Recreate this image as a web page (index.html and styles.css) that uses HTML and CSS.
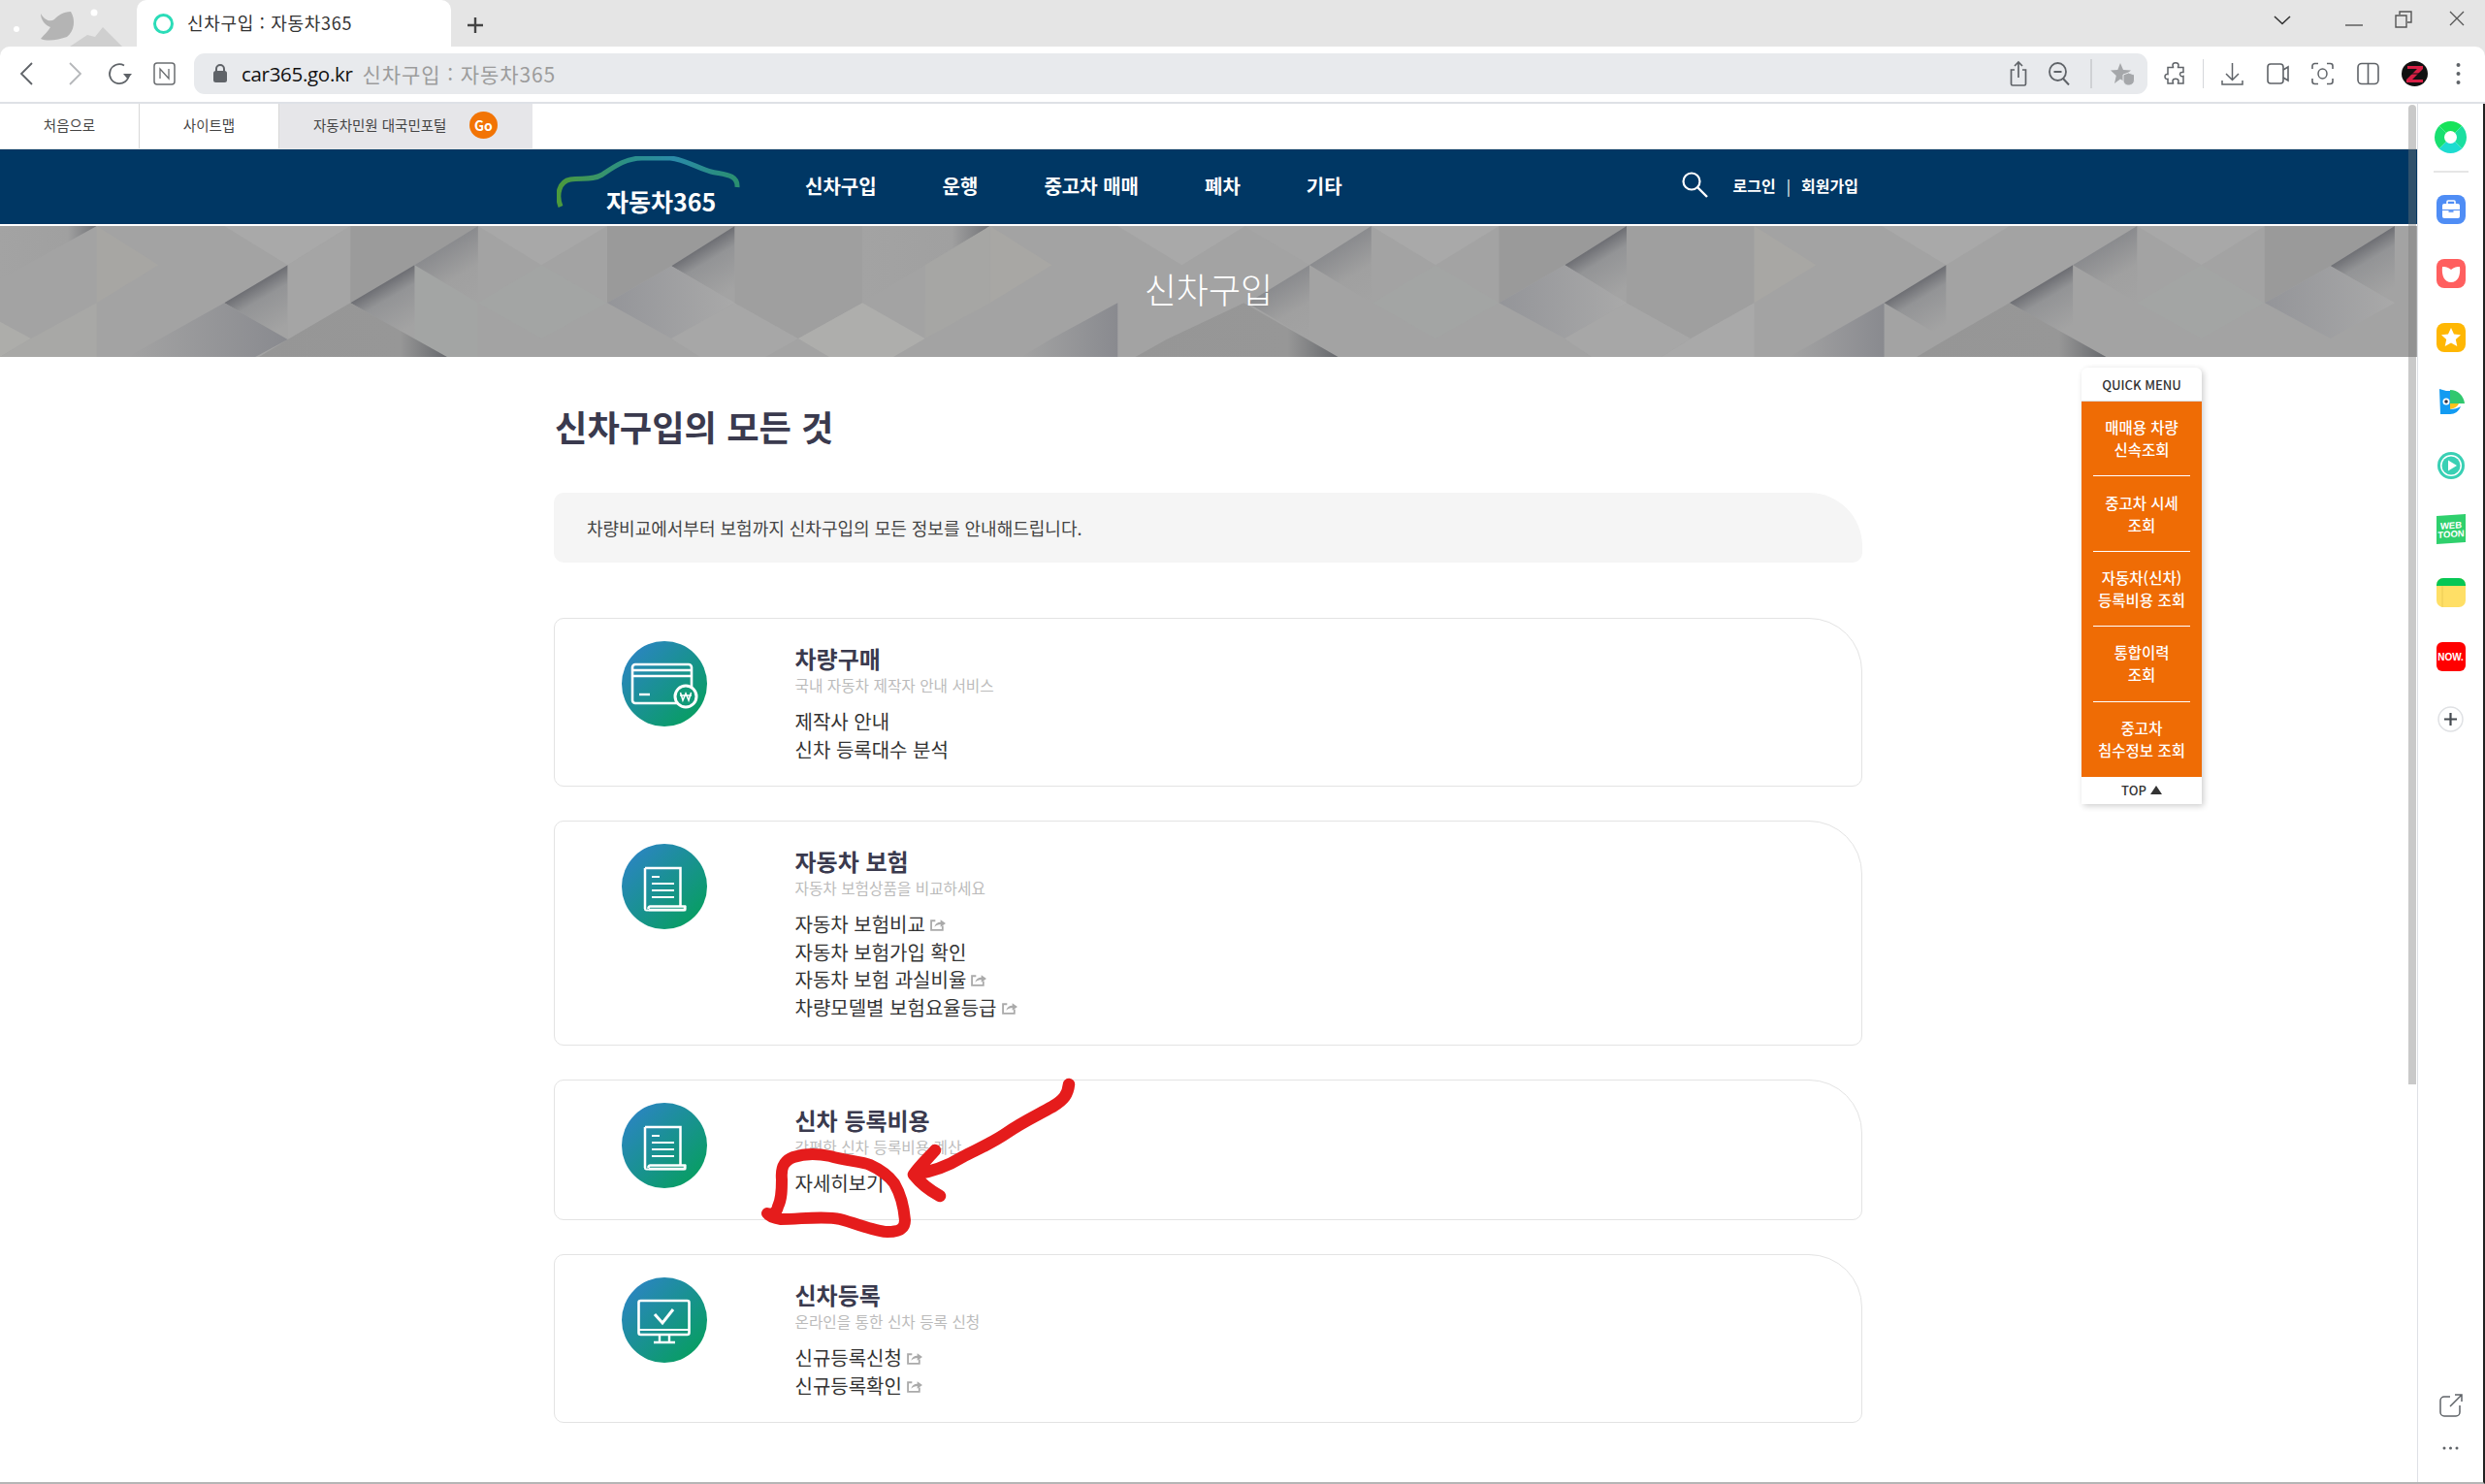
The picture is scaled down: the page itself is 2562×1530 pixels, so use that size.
FILE: index.html
```html
<!DOCTYPE html>
<html lang="ko">
<head>
<meta charset="utf-8">
<title>신차구입 : 자동차365</title>
<link rel="stylesheet" href="styles.css">
</head>
<body>
<div class="browser">
  <header class="tabstrip">
    <svg class="theme" width="141" height="48" viewBox="0 0 141 48">
      <circle cx="17" cy="30" r="3" fill="#fff"/><circle cx="97" cy="13" r="3.5" fill="#fff"/>
      <path d="M42 14c4 7 10 9 14 6 4-4 9-8 17-8 5 8 4 20-4 26-8 3-20 5-27 2 4-5 8-8 10-12-6-2-10-8-10-14z" fill="#b4b4b4"/>
      <path d="M72 48l18-12 8 2 8-10 20 20z" fill="#cfcfcf"/>
    </svg>
    <div class="tab">
      <span class="tab-fav"></span>
      <span class="tab-title">신차구입 : 자동차365</span>
    </div>
    <svg class="newtab" width="20" height="20" viewBox="0 0 20 20"><path d="M10 2v16M2 10h16" stroke="#444" stroke-width="2.4"/></svg>
    <div class="winctl">
      <svg width="18" height="10" viewBox="0 0 18 10"><path d="M1 1l8 7.5L17 1" fill="none" stroke="#333" stroke-width="1.6"/></svg>
      <svg class="wc-min" width="18" height="18" viewBox="0 0 18 18"><path d="M0 16h18" stroke="#555" stroke-width="1.4"/></svg>
      <svg class="wc-max" width="18" height="18" viewBox="0 0 18 18"><path d="M5 4V1h12v11h-4M1 5h11v12H1z" fill="none" stroke="#555" stroke-width="1.4"/></svg>
      <svg class="wc-close" width="16" height="16" viewBox="0 0 16 16"><path d="M1 1l14 14M15 1L1 15" stroke="#555" stroke-width="1.3"/></svg>
    </div>
  </header>

  <div class="toolbar">
    <div class="tb-nav">
      <svg width="14" height="24" viewBox="0 0 14 24"><path d="M13 1L2 12l11 11" fill="none" stroke="#5f6368" stroke-width="1.8"/></svg>
      <svg class="tb-fwd" width="14" height="24" viewBox="0 0 14 24"><path d="M1 1l11 11L1 23" fill="none" stroke="#b5b7ba" stroke-width="1.8"/></svg>
      <svg class="tb-reload" width="26" height="24" viewBox="0 0 26 24"><path d="M17 3.500A10 10 0 1 0 22 13" fill="none" stroke="#5f6368" stroke-width="1.8"/><path d="M16 12h9l-4.500 5.500z" fill="#5f6368"/></svg>
      <svg class="tb-n" width="23" height="24" viewBox="0 0 23 24"><rect x="1" y="1" width="21" height="22" rx="3" fill="none" stroke="#6a6d70" stroke-width="1.5"/><path d="M7 17V7l9 10V7" fill="none" stroke="#6a6d70" stroke-width="1.3"/></svg>
    </div>
    <div class="omnibox">
      <svg class="lock" width="16" height="19" viewBox="0 0 16 19"><path d="M4 8V5a4 4 0 0 1 8 0v3" fill="none" stroke="#5f6368" stroke-width="2"/><rect x="1" y="7" width="14" height="12" rx="2.500" fill="#5f6368"/></svg>
      <span class="url">car365.go.kr</span>
      <span class="url-title">신차구입 : 자동차365</span>
      <div class="omni-right">
        <svg width="18" height="27" viewBox="0 0 18 27"><path d="M5 10H1.500v14.500a1.500 1.500 0 0 0 1.500 1.500h12a1.500 1.500 0 0 0 1.500-1.500V10H13M9 18V2M5 6l4-4 4 4" fill="none" stroke="#5f6368" stroke-width="1.700"/></svg>
        <svg class="om-zoom" width="22" height="24" viewBox="0 0 22 24"><ellipse cx="9.500" cy="10" rx="8.500" ry="9" fill="none" stroke="#5f6368" stroke-width="1.800"/><path d="M5.500 10h8M15 17l6 6.500" stroke="#5f6368" stroke-width="2"/></svg>
        <span class="om-sep"></span>
        <svg width="25" height="24" viewBox="0 0 25 24"><path d="M10 1l3 7 8 .6-6 5 1 7.400-6-3.600L4 22l1.800-8L0 8.600 7.300 8z" fill="#a5a7aa"/><path d="M13 13l5.500-2 6 2v5c0 4-3 6-6 6s-5.500-2-5.500-6z" fill="#a5a7aa" stroke="#e8eaed"/></svg>
      </div>
    </div>
    <div class="tb-right">
      <svg width="23" height="24" viewBox="0 0 23 24"><path d="M9 3c0-3 6-3 6 0 0 1-.5 1.500-.5 2.500H20v5c-1 0-2-.500-3 .5-1.500 2 .5 4.500 3 3.500v7.500h-5.500c0-1 .500-1.500.500-2.500 0-3-6-3-6 0 0 1 .5 1.500.5 2.500H4v-4.500C2 18 1 16.500 1 15s1-3 3-2.500V5.500h5.500C9.500 4.500 9 4 9 3z" fill="none" stroke="#5f6368" stroke-width="1.500"/></svg>
      <span class="tb-sep"></span>
      <svg width="23" height="24" viewBox="0 0 23 24"><path d="M11.500 1v17M5 12l6.500 6.500L18 12M1 19v4h21v-4" fill="none" stroke="#5f6368" stroke-width="1.500"/></svg>
      <svg width="23" height="24" viewBox="0 0 23 24"><rect x="1" y="2" width="16" height="20" rx="3" fill="none" stroke="#5f6368" stroke-width="1.600"/><path d="M17 8l5-3v14l-5-3" fill="none" stroke="#5f6368" stroke-width="1.600"/></svg>
      <svg width="23" height="24" viewBox="0 0 23 24"><path d="M1 7V4a2.500 2.500 0 0 1 2.500-2.500H7M16 1.500h3.500A2.500 2.500 0 0 1 22 4v3M22 17v3a2.500 2.500 0 0 1-2.500 2.500H16M7 22.500H3.500A2.500 2.500 0 0 1 1 20v-3" fill="none" stroke="#5f6368" stroke-width="1.600"/><ellipse cx="11.500" cy="12" rx="4.500" ry="5" fill="none" stroke="#5f6368" stroke-width="1.500"/></svg>
      <svg width="23" height="24" viewBox="0 0 23 24"><rect x="1" y="1.500" width="21" height="21" rx="4" fill="none" stroke="#5f6368" stroke-width="1.600"/><path d="M11.500 1.500v21" stroke="#5f6368" stroke-width="1.600"/></svg>
      <svg class="avatar" width="27" height="26" viewBox="0 0 27 26"><ellipse cx="13.500" cy="13" rx="13.500" ry="13" fill="#111"/><path d="M6 5h16v3L11 19h11v3H5v-3L16 8H6z" fill="#d81f45"/><path d="M5 13h17" stroke="#111" stroke-width="1"/></svg>
      <svg class="dots" width="5" height="24" viewBox="0 0 5 24"><circle cx="2.500" cy="3" r="2" fill="#5f6368"/><circle cx="2.500" cy="12" r="2" fill="#5f6368"/><circle cx="2.500" cy="21" r="2" fill="#5f6368"/></svg>
    </div>
  </div>

  <div class="viewport">
    <main class="page">
      <div class="utility">
        <a class="util-item">처음으로</a>
        <a class="util-item">사이트맵</a>
        <a class="util-item util-portal">자동차민원 대국민포털<span class="go">Go</span></a>
      </div>
      <nav class="gnb">
        <div class="gnb-inner">
          <div class="logo">
            <svg width="192" height="56" viewBox="0 0 192 56">
              <defs><linearGradient id="logoGrad" x1="0" y1="0" x2="1" y2="0"><stop offset="0" stop-color="#4c9a3c"/><stop offset=".4" stop-color="#2a8f8a"/><stop offset=".65" stop-color="#2a8aa8"/><stop offset="1" stop-color="#2a8f70"/></linearGradient></defs>
              <path d="M4 52C-1 39 3 26 14 24 26 22 37 25 47 19 59 11 71 2 88 2H117C131 3 147 13 159 16 171 19 187 18 186 32" fill="none" stroke="url(#logoGrad)" stroke-width="5"/>
            </svg>
            <span class="logo-text">자동차365</span>
          </div>
          <ul class="gnb-menu">
            <li>신차구입</li><li>운행</li><li>중고차 매매</li><li>폐차</li><li>기타</li>
          </ul>
          <div class="gnb-right">
            <svg class="search" width="28" height="28" viewBox="0 0 28 28"><circle cx="11" cy="11" r="8.500" fill="none" stroke="#fff" stroke-width="2.200"/><path d="M17.500 17.500L27 27" stroke="#fff" stroke-width="2.400"/></svg>
            <span>로그인</span><span class="gnb-bar">|</span><span>회원가입</span>
          </div>
        </div>
      </nav>
      <section class="hero">
        <svg class="hero-bg" viewBox="0 24 3125 405" preserveAspectRatio="none">
          <defs>
            <linearGradient id="shR" x1="0" y1=".5" x2=".4" y2="1.300"><stop offset="0" stop-color="#6d6e73"/><stop offset=".25" stop-color="#939496"/><stop offset=".8" stop-color="#a3a3a3"/></linearGradient>
            <linearGradient id="shM" x1="0" y1=".5" x2=".4" y2="1.300"><stop offset="0" stop-color="#8a8b8e"/><stop offset=".5" stop-color="#a0a0a0"/><stop offset="1" stop-color="#a3a3a3"/></linearGradient>
            <linearGradient id="shL"><stop offset="0" stop-color="#a3a3a3"/><stop offset=".7" stop-color="#a0a0a0"/><stop offset="1" stop-color="#737478"/></linearGradient>
            <linearGradient id="shB"><stop offset="0" stop-color="#969696"/><stop offset=".75" stop-color="#979797"/><stop offset="1" stop-color="#66686c"/></linearGradient>
            <linearGradient id="dia"><stop offset="0" stop-color="#949599"/><stop offset="1" stop-color="#a9a9a9"/></linearGradient>
            <linearGradient id="low" x1="0" y1="0" x2="1" y2="0"><stop offset="0" stop-color="#a3a3a3"/><stop offset="1" stop-color="#898a8f"/></linearGradient>
            <g id="heroA">
              <path fill="url(#shL)" d="M0 24H125L0 190z"/>
              <path fill="#a7a6a3" d="M125 24L205 145 125 262z"/>
              <path fill="#a9a9a9" d="M290 24H453L372 145z"/>
              <path fill="#9b9b9b" d="M453 24H618L536 145 453 262z"/>
              <path fill="#a3a5a4" d="M536 145H618V429H536z"/>
              <path fill="url(#shR)" d="M372 145L290 262 372 375z"/>
              <path fill="#a5a5a5" d="M372 145L453 24V262L372 375z"/>
              <path fill="url(#shR)" d="M536 145L453 262 536 375z"/>
              <path fill="url(#shM)" d="M618 24L536 145 618 262z"/>
              <path fill="#a8a8a8" d="M618 24H785L700 145z"/>
              <path fill="#9a9a9a" d="M785 24H950L868 148 785 262z"/>
              <path fill="url(#shR)" d="M950 24L868 148 950 262z"/>
              <path fill="#a3a5a4" d="M618 262L700 145 785 262 700 372z"/>
              <path fill="url(#dia)" d="M785 262L868 148 950 262 868 372z"/>
              <path fill="#a7a7a7" d="M868 372L950 262 1032 372 990 429H905z"/>
              <path fill="#9f9f9f" d="M950 24H1115V262L1032 372 950 262z"/>
              <path fill="#aeaeac" d="M1032 372L1115 262 1196 372 1155 429H1072z"/>
              <path fill="url(#shL)" d="M1115 24H1280L1115 262z"/>
              <path fill="#a6a6a4" d="M1196 145L1280 24V262L1196 372z"/>
              <path fill="#a8a7a4" d="M1280 24L1360 145 1280 262z"/>
              <path fill="#a9a9a9" d="M1445 24H1610L1528 145z"/>
              <path fill="url(#shB)" d="M372 375L453 262 578 429H335z"/>
              <path fill="url(#low)" d="M290 262L372 375 330 429H165z"/>
              <path fill="url(#low)" d="M1445 262L1360 372 1320 429H1445z"/>
              <path fill="#adadaa" d="M0 320L40 372 0 429z"/>
              <path fill="#a8a8a6" d="M40 372L125 262V429H0z"/>
            </g>
            <g id="heroB">
              <path fill="#a5a5a5" d="M40 24H205L125 145z"/>
              <path fill="#a9a9a9" d="M205 24H370L288 145z"/>
              <path fill="#9a9a9a" d="M370 24H535L455 145 370 262z"/>
              <path fill="url(#shR)" d="M535 24L455 145 535 262z"/>
              <path fill="url(#shM)" d="M205 24L125 145 205 262z"/>
              <path fill="url(#shM)" d="M125 145L45 262 125 375z"/>
              <path fill="#a3a5a4" d="M207 262L288 145 370 262 288 372z"/>
              <path fill="url(#dia)" d="M370 262L455 145 535 262 455 372z"/>
              <path fill="#a7a7a7" d="M455 372L535 262 618 372 580 429H490z"/>
              <path fill="#9f9f9f" d="M535 24H700V262L618 372 535 262z"/>
              <path fill="#a9a9a9" d="M618 372L700 262V429H580z"/>
              <path fill="#a8a7a4" d="M700 24L780 145 700 262z"/>
              <path fill="#a9a9a9" d="M865 24H1030L948 145z"/>
              <path fill="url(#shR)" d="M948 145L868 262 948 375z"/>
              <path fill="url(#shR)" d="M1112 145L1030 262 1112 375z"/>
              <path fill="url(#shM)" d="M1195 24L1112 145 1195 262z"/>
              <path fill="#a8a8a8" d="M1195 24H1360L1278 145z"/>
              <path fill="#9a9a9a" d="M1360 24H1528L1445 148 1360 262z"/>
              <path fill="url(#shR)" d="M1528 24L1445 148 1528 262z"/>
              <path fill="#a3a5a4" d="M1195 262L1278 145 1360 262 1278 372z"/>
              <path fill="url(#dia)" d="M1360 262L1445 148 1528 262 1445 372z"/>
              <path fill="url(#shB)" d="M948 375L1030 262 1155 429H910z"/>
              <path fill="url(#shB)" d="M-60 375L40 262 162 429H-100z"/>
              <path fill="url(#low)" d="M868 262L745 429H868z"/>
            </g>
          </defs>
          <rect x="0" y="24" width="3125" height="405" fill="#a3a3a3"/>
          <use href="#heroA"/>
          <use href="#heroB" x="1568"/>
        </svg>
        <span class="hero-title">신차구입</span>
      </section>

      <div class="content">
        <h1 class="page-title">신차구입의 모든 것</h1>
        <p class="notice">차량비교에서부터 보험까지 신차구입의 모든 정보를 안내해드립니다.</p>

        <svg class="defs-holder" width="0" height="0">
          <defs>
            <symbol id="ext" viewBox="0 0 15 12"><path d="M5 2H1v9h11V7" fill="none" stroke="#aaa" stroke-width="1.700"/><path d="M4 8c1-3 3-4.500 6-4.500V1l5 3.500L10 8V5.500C8 5.500 6 6.500 4 8z" fill="#aaa"/></symbol>
            <symbol id="doc" viewBox="0 0 88 88"><path d="M24 25h36.500v39M24 25v42M28 68h37v-3.500H29.500a2 2 0 0 0-2 2.500" fill="none" stroke="#fff" stroke-width="2.500"/><path d="M24 67a1.500 1.500 0 0 0 1.500 1.500H64a1.500 1.500 0 0 0 1.500-1.500v-3" fill="none" stroke="#fff" stroke-width="2"/><path d="M31 34h8M31 41h23M31 48h23M31 55h23" stroke="#fff" stroke-width="2"/></symbol>
          </defs>
        </svg>

        <article class="card">
          <div class="card-icon">
            <svg width="88" height="88" viewBox="0 0 88 88"><rect x="11" y="24" width="61" height="40" rx="3" fill="none" stroke="#fff" stroke-width="2.600"/><path d="M12 30h59M12 36h59" stroke="#fff" stroke-width="2.400"/><path d="M18 55h11" stroke="#fff" stroke-width="2.400"/><circle cx="66" cy="57" r="11" fill="#129a78" stroke="#fff" stroke-width="3"/><path d="M60.500 53l2.500 8 3-7 3 7 2.500-8M60 56h12" fill="none" stroke="#fff" stroke-width="1.500"/></svg>
          </div>
          <div class="card-body">
            <h2 class="card-title">차량구매</h2>
            <p class="card-sub">국내 자동차 제작자 안내 서비스</p>
            <ul class="card-links">
              <li>제작사 안내</li>
              <li>신차 등록대수 분석</li>
            </ul>
          </div>
        </article>

        <article class="card">
          <div class="card-icon"><svg width="88" height="88"><use href="#doc"/></svg></div>
          <div class="card-body">
            <h2 class="card-title">자동차 보험</h2>
            <p class="card-sub">자동차 보험상품을 비교하세요</p>
            <ul class="card-links">
              <li>자동차 보험비교<svg class="ext" width="16" height="13"><use href="#ext"/></svg></li>
              <li>자동차 보험가입 확인</li>
              <li>자동차 보험 과실비율<svg class="ext" width="16" height="13"><use href="#ext"/></svg></li>
              <li>차량모델별 보험요율등급<svg class="ext" width="16" height="13"><use href="#ext"/></svg></li>
            </ul>
          </div>
        </article>

        <article class="card">
          <div class="card-icon"><svg width="88" height="88"><use href="#doc"/></svg></div>
          <div class="card-body">
            <h2 class="card-title">신차 등록비용</h2>
            <p class="card-sub">간편한 신차 등록비용 계산</p>
            <ul class="card-links">
              <li>자세히보기</li>
            </ul>
          </div>
        </article>

        <article class="card">
          <div class="card-icon">
            <svg width="88" height="88" viewBox="0 0 88 88"><rect x="17.500" y="24" width="52" height="35" rx="2" fill="none" stroke="#fff" stroke-width="2.600"/><path d="M18 54h51" stroke="#fff" stroke-width="2.200"/><path d="M39 60v7M49 60v7M33 67h22" stroke="#fff" stroke-width="2.400"/><path d="M34 38l8 9 11-14" fill="none" stroke="#fff" stroke-width="3"/></svg>
          </div>
          <div class="card-body">
            <h2 class="card-title">신차등록</h2>
            <p class="card-sub">온라인을 통한 신차 등록 신청</p>
            <ul class="card-links">
              <li>신규등록신청<svg class="ext" width="16" height="13"><use href="#ext"/></svg></li>
              <li>신규등록확인<svg class="ext" width="16" height="13"><use href="#ext"/></svg></li>
            </ul>
          </div>
        </article>
      </div>

      <aside class="quick">
        <div class="quick-head">QUICK MENU</div>
        <ul class="quick-list">
          <li>매매용 차량<br>신속조회</li>
          <li>중고차 시세<br>조회</li>
          <li>자동차(신차)<br>등록비용 조회</li>
          <li>통합이력<br>조회</li>
          <li>중고차<br>침수정보 조회</li>
        </ul>
        <div class="quick-top">TOP <span class="tri"></span></div>
      </aside>
      <div class="scrollbar"></div>
    </main>

    <aside class="sidebar">
      <div class="side-ring"></div>
      <span class="side-div"></span>
      <div class="side-apps">
        <svg width="30" height="30" viewBox="0 0 30 30"><rect width="30" height="30" rx="8" fill="#4f8df5"/><rect x="11" y="6" width="8" height="4" rx="1" fill="none" stroke="#fff" stroke-width="1.600"/><path d="M6 11a2 2 0 0 1 2-2h14a2 2 0 0 1 2 2v4H6z" fill="#fff"/><path d="M6 16h18v6a2 2 0 0 1-2 2H8a2 2 0 0 1-2-2z" fill="#fff"/><path d="M12.500 17h5" stroke="#4f8df5" stroke-width="1.600"/></svg>
        <svg width="30" height="30" viewBox="0 0 30 30"><rect width="30" height="30" rx="8" fill="#ff5f5f"/><path d="M6 8c3 0 6 .5 9 3 3-2.500 6-3 9-3 1 9-2 16-9 16S5 17 6 8z" fill="#fff"/></svg>
        <svg width="30" height="30" viewBox="0 0 30 30"><rect width="30" height="30" rx="8" fill="#ffb703"/><path d="M15 5l3 6.500 7 .8-5.200 4.700L21.300 24 15 20.400 8.700 24l1.500-7L5 12.300l7-.8z" fill="#fff"/></svg>
        <svg width="30" height="30" viewBox="0 0 30 30"><path d="M3 2l7 2h4v24H4z" fill="#129bf2"/><path d="M14 3c8 0 14 6 15 14H14z" fill="#31c86e"/><path d="M14 17h9c-1 3-4 5-9 6z" fill="#ffc21a"/><path d="M14 23c4 0 8-1 11-3-2 5-6 8-11 8z" fill="#129bf2"/><circle cx="10" cy="15" r="3.500" fill="#fff"/><circle cx="10" cy="15" r="1.800" fill="#334"/></svg>
        <svg width="30" height="30" viewBox="0 0 30 30"><circle cx="15" cy="15" r="14" fill="#39d0b4"/><circle cx="15" cy="15" r="11" fill="#fff"/><circle cx="15" cy="15" r="9.500" fill="#39d0b4"/><path d="M12 9.500l9 5.500-9 5.500z" fill="#fff"/></svg>
        <div class="toon"><span>WEB<br>TOON</span></div>
        <svg width="30" height="30" viewBox="0 0 30 30"><rect width="30" height="30" rx="7" fill="#ffdf66"/><path d="M0 8V7a7 7 0 0 1 7-7h16a7 7 0 0 1 7 7v1z" fill="#06c755"/><path d="M6 8v22" stroke="#eccc55"/></svg>
        <div class="now">NOW.</div>
        <svg width="27" height="27" viewBox="0 0 27 27"><circle cx="13.500" cy="13.500" r="12.500" fill="#fff" stroke="#dfe1e4" stroke-width="1.500"/><path d="M13.500 7v13M7 13.500h13" stroke="#454a50" stroke-width="2.200"/></svg>
      </div>
      <div class="side-bottom">
        <svg width="24" height="24" viewBox="0 0 24 24"><path d="M11 3H5a4 4 0 0 0-4 4v12a4 4 0 0 0 4 4h12a4 4 0 0 0 4-4v-7M11 13L23 1M16 1h7v7" fill="none" stroke="#5f6368" stroke-width="1.500"/></svg>
        <svg width="17" height="4" viewBox="0 0 17 4"><circle cx="2" cy="2" r="1.500" fill="#5f6368"/><circle cx="8.500" cy="2" r="1.500" fill="#5f6368"/><circle cx="15" cy="2" r="1.500" fill="#5f6368"/></svg>
      </div>
    </aside>
  </div>

  <svg class="scribble" width="2562" height="1530" viewBox="0 0 2562 1530">
    <path d="M1102 1118C1101 1128 1097 1134 1085 1141 1065 1152 1052 1158 1038 1168 1022 1179 1007 1185 992 1193 976 1203 962 1208 942 1211M964 1186C957 1194 948 1202 942 1211 950 1221 958 1227 969 1233" fill="none" stroke="#e51c1c" stroke-width="12.500" stroke-linecap="round" stroke-linejoin="round"/>
    <path d="M791 1251C796 1253 801 1250 802 1244 806 1236 806 1226 806 1216 805 1205 807 1197 818 1193 830 1189 842 1189 856 1192 872 1197 888 1197 897 1201 908 1206 916 1212 922 1220 929 1232 932 1246 933 1258 933 1268 926 1270 915 1270 903 1270 885 1262 866 1257 850 1253 825 1257 805 1257 798 1256 793 1254 791 1251z" fill="none" stroke="#e51c1c" stroke-width="12" stroke-linecap="round" stroke-linejoin="round"/>
  </svg>
</div>
</body>
</html>
```

FILE: styles.css
```css
* { box-sizing: border-box; }
html, body { margin: 0; padding: 0; }
body {
  width: 2562px;
  height: 1530px;
  overflow: hidden;
  font-family: "Noto Sans CJK KR", "Noto Sans", sans-serif;
  color: #333;
  background: #fff;
}
ul { list-style: none; margin: 0; padding: 0; }
h1, h2, p { margin: 0; }
svg { display: block; flex: none; }

.browser {
  position: relative;
  display: flex;
  flex-direction: column;
  width: 2562px;
  height: 1530px;
  background: #e5e5e5;
}

/* tab strip */
.tabstrip {
  display: flex;
  align-items: flex-start;
  height: 48px;
  flex: none;
  position: relative;
}
.theme { width: 141px; }
.tab {
  display: flex;
  align-items: center;
  width: 324px;
  height: 48px;
  background: #fff;
  border-radius: 10px 10px 0 0;
  padding-left: 17px;
}
.tab-fav {
  width: 21px;
  height: 21px;
  border: 3.500px solid #2bdcb8;
  border-radius: 50%;
}
.tab-title {
  margin: -3px 0 0 14px;
  font-size: 18px;
  letter-spacing: .7px;
  color: #333;
}
.newtab { margin: 16px 0 0 15px; }
.winctl {
  margin-left: auto;
  display: flex;
  align-items: flex-start;
  padding-right: 21px;
}
.winctl svg:first-child { margin: 16px 0 0 0; }
.wc-min { margin: 10px 0 0 56px; }
.wc-max { margin: 11px 0 0 33px; }
.wc-close { margin: 11px 0 0 38px; }

/* toolbar */
.toolbar {
  display: flex;
  align-items: center;
  flex: none;
  height: 59px;
  padding: 0 24px 2px 20px;
  background: #fff;
  border-radius: 10px 10px 0 0;
  border-bottom: 2px solid #dee1e6;
}
.tb-nav { display: flex; align-items: center; width: 180px; }
.tb-fwd { margin-left: 37px; }
.tb-reload { margin-left: 26px; }
.tb-n { margin-left: 21px; }
.omnibox {
  display: flex;
  align-items: center;
  height: 42px;
  width: 2014px;
  background: #e8eaed;
  border-radius: 11px;
  padding: 0 13px 0 19px;
}
.url {
  margin-left: 14px;
  font-family: "Open Sans", sans-serif;
  font-size: 20.500px;
  letter-spacing: -.3px;
  color: #111;
}
.url-title {
  margin-left: 10px;
  font-size: 21px;
  letter-spacing: .9px;
  color: #9c9c9c;
}
.omni-right { margin-left: auto; display: flex; align-items: center; }
.om-zoom { margin-left: 22px; }
.om-sep { width: 2px; height: 30px; background: #cfd1d4; margin: 0 19px 0 21px; }
.tb-right {
  display: flex;
  align-items: center;
  margin-left: 17px;
}
.tb-sep { width: 1px; height: 30px; background: #d5d7da; margin: 0 18px 0 17px; }
.tb-right svg + svg { margin-left: 23.600px; }
.tb-right .avatar { margin-left: 23px; }
.tb-right .dots { margin-left: 29px; }

/* viewport */
.viewport {
  display: flex;
  flex: 1;
  min-height: 0;
  background: #fff;
  border-bottom: 2px solid #b5b5b5;
  border-right: 2px solid #222;
}
.page {
  position: relative;
  width: 2492px;
  flex: none;
  overflow: hidden;
  background: #fff;
}

.utility {
  display: flex;
  height: 46px;
  background: #fff;
}
.util-item {
  display: flex;
  align-items: center;
  justify-content: center;
  width: 144px;
  padding-bottom: 3px;
  font-size: 14.500px;
  color: #444;
  border-right: 1px solid #d8d8d8;
}
.util-portal {
  width: 261px;
  background: #e6e6e9;
  border-right: 0;
  justify-content: flex-start;
  padding-left: 35px;
}
.go {
  display: flex;
  align-items: center;
  justify-content: center;
  width: 29px;
  height: 28px;
  margin-left: 23.500px;
  border-radius: 50%;
  background: #f27405;
  color: #fff;
  font-size: 14px;
  font-weight: 700;
}

.gnb {
  height: 80px;
  background: #003764;
  border-bottom: 2px solid #fff;
  border-top: 1px solid #e8e8e8;
}
.gnb-inner {
  display: flex;
  align-items: center;
  width: 1350px;
  height: 77px;
  margin: 0 auto;
  padding: 0 0 3px 1px;
}
.logo {
  position: relative;
  width: 258px;
  height: 77px;
  padding: 7px 0 0 2px;
  flex: none;
  align-self: flex-start;
}
.logo-text {
  position: absolute;
  left: 53px;
  top: 34px;
  font-size: 25px;
  line-height: 38px;
  font-weight: 700;
  color: #fff;
  white-space: nowrap;
}
.gnb-menu {
  display: flex;
  gap: 68px;
  color: #fff;
  font-size: 20px;
  font-weight: 700;
}
.gnb-right {
  margin-left: auto;
  display: flex;
  align-items: center;
  padding-right: 5px;
  color: #fff;
  font-size: 16px;
  font-weight: 700;
}
.search { margin-right: 26px; margin-top: -3px; }
.gnb-bar { margin: 0 11px; font-weight: 400; }

.hero {
  position: relative;
  display: flex;
  align-items: center;
  justify-content: center;
  height: 135px;
  padding-bottom: 8px;
  overflow: hidden;
  background: #a3a3a3;
}
.hero-bg {
  position: absolute;
  left: 0;
  top: 0;
  width: 2492px;
  height: 135px;
}
.hero-title {
  position: relative;
  font-size: 36px;
  font-weight: 300;
  color: #fff;
  line-height: 1;
}

.content {
  width: 1350px;
  margin: 0 auto;
  padding: 46px 1px 0 0;
}
.defs-holder { position: absolute; }
.page-title {
  padding-left: 1px;
  font-size: 36.300px;
  line-height: 50px;
  font-weight: 600;
  color: #3a3a4e;
}
.notice {
  margin-top: 44px;
  height: 72px;
  padding: 0 34px;
  display: flex;
  align-items: center;
  font-size: 18px;
  color: #444;
  background: #f5f5f5;
  border-radius: 10px 55px 10px 10px;
}
.card {
  display: flex;
  margin-top: 35px;
  padding: 23px 0 23px 69px;
  border: 1px solid #e3e3e3;
  border-radius: 10px 55px 10px 10px;
  background: #fff;
}
.notice + .defs-holder + .card { margin-top: 57px; }
.card-icon {
  width: 88px;
  height: 88px;
  flex: none;
  border-radius: 50%;
  background: linear-gradient(135deg, #2c84c4 8%, #069f5e 92%);
}
.card-body { margin-left: 90.500px; }
.card-title {
  font-size: 24px;
  line-height: 36px;
  font-weight: 600;
  color: #3a3a4e;
}
.card-sub {
  font-size: 15.700px;
  line-height: 20px;
  color: #bbb;
}
.card-links {
  margin-top: 13px;
  font-size: 20px;
  line-height: 28.600px;
  color: #333;
}
.card-links li { display: flex; align-items: center; }
.ext { margin-left: 5px; }

.quick {
  position: absolute;
  left: 2146px;
  top: 272px;
  width: 124px;
  border-radius: 6px 6px 0 0;
  background: #fff;
  box-shadow: 2px 2px 6px rgba(0,0,0,.2);
}
.quick-head {
  display: flex;
  align-items: center;
  justify-content: center;
  height: 35px;
  font-size: 13px;
  font-weight: 500;
  color: #333;
  border-bottom: 1px solid #ddd;
}
.quick-list {
  background: #ef6c05;
  padding: 0 12px;
}
.quick-list li {
  display: flex;
  align-items: center;
  justify-content: center;
  height: 77.400px;
  text-align: center;
  font-size: 15.500px;
  line-height: 23px;
  font-weight: 500;
  color: #fff;
  white-space: nowrap;
  border-bottom: 1px solid #fff;
}
.quick-list li:last-child { border-bottom: 0; }
.quick-top {
  display: flex;
  align-items: center;
  justify-content: center;
  gap: 4px;
  height: 28px;
  font-size: 13px;
  font-weight: 500;
  color: #333;
}
.tri {
  width: 0;
  height: 0;
  border-left: 6px solid transparent;
  border-right: 6px solid transparent;
  border-bottom: 9px solid #333;
}

.scrollbar {
  position: absolute;
  left: 2483px;
  top: 1px;
  width: 8px;
  height: 1010px;
  border-radius: 4px 4px 0 0;
  background: rgba(120,120,120,.4);
}

/* side panel */
.sidebar {
  display: flex;
  flex-direction: column;
  align-items: center;
  flex: 1;
  border-left: 1px solid #dee1e6;
  padding-top: 18px;
}
.side-ring {
  width: 33px;
  height: 33px;
  border-radius: 50%;
  border: 10px solid #1de36a;
  border-color: #16e35a #1adfa0 #1ddcd0 #18e070;
}
.side-div { width: 36px; height: 2px; background: #e6e6e6; margin-top: 18px; }
.side-apps {
  display: flex;
  flex-direction: column;
  align-items: center;
  gap: 36px;
  margin-top: 23px;
}
.toon {
  display: flex;
  align-items: center;
  justify-content: center;
  width: 30px;
  height: 29px;
  background: #2fd06d;
  transform: skewY(-4deg);
  color: #fff;
  font: 700 9.500px/9px "Liberation Sans", sans-serif;
  text-align: center;
}
.now {
  display: flex;
  align-items: center;
  justify-content: center;
  width: 30px;
  height: 30px;
  border-radius: 6px;
  background: #ff0000;
  color: #fff;
  font: 800 10px "Liberation Sans", sans-serif;
}
.side-bottom {
  margin-top: auto;
  display: flex;
  flex-direction: column;
  align-items: center;
  gap: 30px;
  padding-bottom: 33px;
}

.scribble {
  position: absolute;
  left: 0;
  top: 0;
  pointer-events: none;
}
```
